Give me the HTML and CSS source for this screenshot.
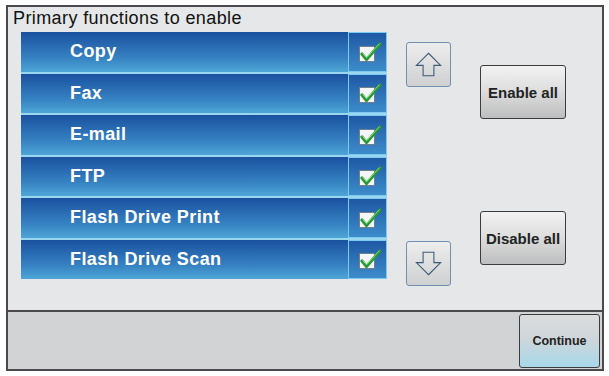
FILE: index.html
```html
<!DOCTYPE html>
<html>
<head>
<meta charset="utf-8">
<link rel="stylesheet" href="styles.css">
</head>
<body>
<div class="frame">
  <div class="main">
    <div class="title">Primary functions to enable</div>
    <div class="content">
      <div class="list">
        <div class="row"><span class="label">Copy</span><span class="check"><svg class="cb" viewBox="0 0 24 22"><rect x="1.5" y="5.5" width="15" height="15" fill="#f4f6f8" stroke="#6f7f8c"/><path d="M4 13 L8.5 18.5 L22 3" fill="none" stroke="#2a9636" stroke-width="3.2" stroke-linejoin="round" stroke-linecap="round"/><path d="M4.6 12.4 L8.6 16.8 L21.4 2.6" fill="none" stroke="#86e08a" stroke-width="1"/></svg></span></div>
        <div class="row"><span class="label">Fax</span><span class="check"><svg class="cb" viewBox="0 0 24 22"><rect x="1.5" y="5.5" width="15" height="15" fill="#f4f6f8" stroke="#6f7f8c"/><path d="M4 13 L8.5 18.5 L22 3" fill="none" stroke="#2a9636" stroke-width="3.2" stroke-linejoin="round" stroke-linecap="round"/><path d="M4.6 12.4 L8.6 16.8 L21.4 2.6" fill="none" stroke="#86e08a" stroke-width="1"/></svg></span></div>
        <div class="row"><span class="label">E-mail</span><span class="check"><svg class="cb" viewBox="0 0 24 22"><rect x="1.5" y="5.5" width="15" height="15" fill="#f4f6f8" stroke="#6f7f8c"/><path d="M4 13 L8.5 18.5 L22 3" fill="none" stroke="#2a9636" stroke-width="3.2" stroke-linejoin="round" stroke-linecap="round"/><path d="M4.6 12.4 L8.6 16.8 L21.4 2.6" fill="none" stroke="#86e08a" stroke-width="1"/></svg></span></div>
        <div class="row"><span class="label">FTP</span><span class="check"><svg class="cb" viewBox="0 0 24 22"><rect x="1.5" y="5.5" width="15" height="15" fill="#f4f6f8" stroke="#6f7f8c"/><path d="M4 13 L8.5 18.5 L22 3" fill="none" stroke="#2a9636" stroke-width="3.2" stroke-linejoin="round" stroke-linecap="round"/><path d="M4.6 12.4 L8.6 16.8 L21.4 2.6" fill="none" stroke="#86e08a" stroke-width="1"/></svg></span></div>
        <div class="row"><span class="label">Flash Drive Print</span><span class="check"><svg class="cb" viewBox="0 0 24 22"><rect x="1.5" y="5.5" width="15" height="15" fill="#f4f6f8" stroke="#6f7f8c"/><path d="M4 13 L8.5 18.5 L22 3" fill="none" stroke="#2a9636" stroke-width="3.2" stroke-linejoin="round" stroke-linecap="round"/><path d="M4.6 12.4 L8.6 16.8 L21.4 2.6" fill="none" stroke="#86e08a" stroke-width="1"/></svg></span></div>
        <div class="row"><span class="label">Flash Drive Scan</span><span class="check"><svg class="cb" viewBox="0 0 24 22"><rect x="1.5" y="5.5" width="15" height="15" fill="#f4f6f8" stroke="#6f7f8c"/><path d="M4 13 L8.5 18.5 L22 3" fill="none" stroke="#2a9636" stroke-width="3.2" stroke-linejoin="round" stroke-linecap="round"/><path d="M4.6 12.4 L8.6 16.8 L21.4 2.6" fill="none" stroke="#86e08a" stroke-width="1"/></svg></span></div>
      </div>
      <div class="arrows">
        <div class="arrow"><svg viewBox="0 0 30 28" class="ai"><path d="M15 1.5 L28.5 15 L21 15 L21 26.5 L9 26.5 L9 15 L1.5 15 Z" fill="none" stroke="#3c5a78" stroke-width="1.2" stroke-linejoin="miter"/></svg></div>
        <div class="arrow"><svg viewBox="0 0 30 28" class="ai"><path d="M15 26.5 L28.5 13 L21 13 L21 1.5 L9 1.5 L9 13 L1.5 13 Z" fill="none" stroke="#3c5a78" stroke-width="1.2" stroke-linejoin="miter"/></svg></div>
      </div>
      <div class="actions">
        <div class="btn">Enable all</div>
        <div class="btn">Disable all</div>
      </div>
    </div>
  </div>
  <div class="footer">
    <div class="continue">Continue</div>
  </div>
</div>
</body>
</html>
```
FILE: styles.css
```css
* { box-sizing: border-box; }
html, body { margin: 0; padding: 0; background: #ffffff; }
body { font-family: "Liberation Sans", Arial, sans-serif; }

.frame {
  margin: 5px 0 0 6px;
  width: 598px;
  height: 366px;
  border: 2px solid #4a4a4c;
  background: #e6e7e8;
  display: flex;
  flex-direction: column;
}

.main {
  flex: 1;
  padding: 0 0 0 5px;
}

.title {
  font-size: 18px;
  line-height: 22px;
  color: #111;
  letter-spacing: 0.4px;
  height: 25px;
}

.content {
  display: flex;
  align-items: flex-start;
  padding-left: 8px;
}

.list {
  width: 366px;
  display: flex;
  flex-direction: column;
  gap: 2px;
  background: #9ad6ee;
}

.row {
  height: 39.5px;
  display: flex;
  background: linear-gradient(#1a51a0, #3682c2 65%, #4ea6d6);
}

.label {
  flex: 1;
  padding-left: 49px;
  color: #fff;
  font-weight: bold;
  font-size: 18px;
  line-height: 38px;
  letter-spacing: 0.4px;
}

.check {
  width: 39px;
  border: 1px solid #7ccaef;
  background: linear-gradient(#1f58a4, #3d8cca);
  display: flex;
  align-items: center;
  justify-content: center;
}

.cb { width: 24px; height: 22px; margin-left: 4px; margin-top: 0; }

.arrows {
  margin-left: 19px;
  width: 45px;
  display: flex;
  flex-direction: column;
  justify-content: space-between;
  padding: 10px 0 0 0;
  height: 254px;
}

.arrow {
  width: 45px;
  height: 45px;
  border: 1.5px solid #6f8fb3;
  border-radius: 3px;
  background: linear-gradient(#ededed, #cfd0d1);
  display: flex;
  align-items: center;
  justify-content: center;
}

.ai { width: 27px; height: 27px; }

.actions {
  margin-left: 29px;
  width: 86px;
  display: flex;
  flex-direction: column;
  gap: 92px;
  padding-top: 33px;
}

.btn {
  height: 54px;
  border: 1px solid #3c3c3c;
  border-radius: 3px;
  background: linear-gradient(#f2f2f2, #dcdcdc 50%, #bdbebf);
  display: flex;
  align-items: center;
  justify-content: center;
  font-weight: bold;
  font-size: 15px;
  color: #222;
}

.footer {
  height: 59px;
  border-top: 2px solid #4a4a4c;
  background: #d2d3d4;
  display: flex;
  justify-content: flex-end;
  padding: 2px 2px 0 0;
}

.continue {
  width: 81px;
  height: 54px;
  border: 1px solid #3c3c3c;
  border-radius: 3px;
  background: linear-gradient(#dcdcdc, #cfd6da 45%, #a8d8ea);
  display: flex;
  align-items: center;
  justify-content: center;
  font-weight: bold;
  font-size: 12.5px;
  color: #222;
}
```
